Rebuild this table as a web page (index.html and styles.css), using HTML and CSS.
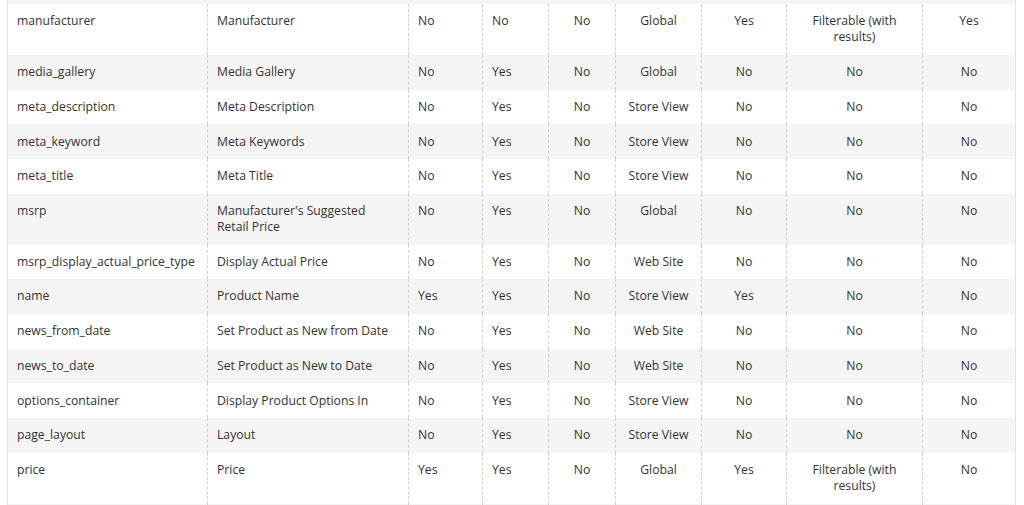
FILE: index.html
```html
<!DOCTYPE html>
<html>
<head>
<meta charset="utf-8">
<link rel="stylesheet" href="styles.css">
</head>
<body>
<div class="wrap">
  <div class="prev"></div>
  <table class="attrs">
    <tbody>
      <tr><td class="c1">manufacturer</td><td class="c2">Manufacturer</td><td class="c3">No</td><td class="c4">No</td><td class="c5 ctr">No</td><td class="c6 ctr">Global</td><td class="c7 ctr">Yes</td><td class="c8 ctr">Filterable (with results)</td><td class="c9 ctr">Yes</td></tr>
      <tr class="alt"><td>media_gallery</td><td>Media Gallery</td><td>No</td><td>Yes</td><td class="ctr">No</td><td class="ctr">Global</td><td class="ctr">No</td><td class="ctr">No</td><td class="ctr">No</td></tr>
      <tr><td>meta_description</td><td>Meta Description</td><td>No</td><td>Yes</td><td class="ctr">No</td><td class="ctr">Store View</td><td class="ctr">No</td><td class="ctr">No</td><td class="ctr">No</td></tr>
      <tr class="alt"><td>meta_keyword</td><td>Meta Keywords</td><td>No</td><td>Yes</td><td class="ctr">No</td><td class="ctr">Store View</td><td class="ctr">No</td><td class="ctr">No</td><td class="ctr">No</td></tr>
      <tr><td>meta_title</td><td>Meta Title</td><td>No</td><td>Yes</td><td class="ctr">No</td><td class="ctr">Store View</td><td class="ctr">No</td><td class="ctr">No</td><td class="ctr">No</td></tr>
      <tr class="alt"><td>msrp</td><td>Manufacturer's Suggested Retail Price</td><td>No</td><td>Yes</td><td class="ctr">No</td><td class="ctr">Global</td><td class="ctr">No</td><td class="ctr">No</td><td class="ctr">No</td></tr>
      <tr><td>msrp_display_actual_price_type</td><td>Display Actual Price</td><td>No</td><td>Yes</td><td class="ctr">No</td><td class="ctr">Web Site</td><td class="ctr">No</td><td class="ctr">No</td><td class="ctr">No</td></tr>
      <tr class="alt"><td>name</td><td>Product Name</td><td>Yes</td><td>Yes</td><td class="ctr">No</td><td class="ctr">Store View</td><td class="ctr">Yes</td><td class="ctr">No</td><td class="ctr">No</td></tr>
      <tr><td>news_from_date</td><td>Set Product as New from Date</td><td>No</td><td>Yes</td><td class="ctr">No</td><td class="ctr">Web Site</td><td class="ctr">No</td><td class="ctr">No</td><td class="ctr">No</td></tr>
      <tr class="alt"><td>news_to_date</td><td>Set Product as New to Date</td><td>No</td><td>Yes</td><td class="ctr">No</td><td class="ctr">Web Site</td><td class="ctr">No</td><td class="ctr">No</td><td class="ctr">No</td></tr>
      <tr><td>options_container</td><td>Display Product Options In</td><td>No</td><td>Yes</td><td class="ctr">No</td><td class="ctr">Store View</td><td class="ctr">No</td><td class="ctr">No</td><td class="ctr">No</td></tr>
      <tr class="alt"><td>page_layout</td><td>Layout</td><td>No</td><td>Yes</td><td class="ctr">No</td><td class="ctr">Store View</td><td class="ctr">No</td><td class="ctr">No</td><td class="ctr">No</td></tr>
      <tr><td>price</td><td>Price</td><td>Yes</td><td>Yes</td><td class="ctr">No</td><td class="ctr">Global</td><td class="ctr">Yes</td><td class="ctr">Filterable (with results)</td><td class="ctr">No</td></tr>
      <tr class="alt"><td>&nbsp;</td><td></td><td></td><td></td><td></td><td></td><td></td><td></td><td></td></tr>
    </tbody>
  </table>
</div>
</body>
</html>
```

FILE: styles.css
```css
html, body {
  margin: 0;
  padding: 0;
  background: #fff;
  overflow: hidden;
}
body {
  font-family: "Open Sans", "Liberation Sans", sans-serif;
  font-size: 12.2px;
  color: #333;
}
.wrap {
  margin-left: 7px;
  width: 1007px;
  border-left: 1px solid #e3e3e3;
  border-right: 1px solid #e3e3e3;
}
.prev {
  height: 4px;
  background: #f5f5f5;
}
.attrs {
  width: 1007px;
  border-collapse: separate;
  border-spacing: 0;
  table-layout: fixed;
}
.attrs td {
  box-sizing: border-box;
  padding: 9.2px 9px 9.2px 9px;
  line-height: 16.3px;
  vertical-align: top;
  border-left: 1px dashed #d2d2d2;
  text-align: left;
}
.attrs td:first-child {
  border-left: none;
}
.attrs td.ctr {
  text-align: center;
}
.c1 { width: 199px; }
.c2 { width: 201px; }
.c3 { width: 74px; }
.c4 { width: 66px; }
.c5 { width: 67px; }
.c6 { width: 86px; }
.c7 { width: 85px; }
.c8 { width: 136px; }
.c9 { width: 93px; }
.attrs tr.alt {
  background: #f5f5f5;
}
```
